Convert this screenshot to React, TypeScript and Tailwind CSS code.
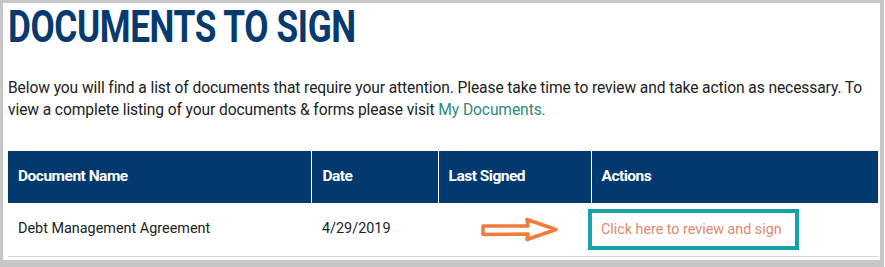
export default function App() {
  const font = { fontFamily: 'Roboto, "Noto Sans", sans-serif' };
  return (
    <div className="w-[885px] h-[267px] bg-white overflow-hidden" style={font}>
      <div className="h-[267px] w-[884px] border-l-[3px] border-t-[3px] border-r-[4px] border-b-[7px] border-[#c6c6c6] bg-white">
        <div className="pl-[5px] pr-[2px]">
          <h1 className="h-[50px] pt-[2px] text-[44px] leading-[44px] font-bold text-[#073b6f]">
            <span className="inline-block origin-left scale-x-[0.8] tracking-[-0.5px]">DOCUMENTS TO SIGN</span>
          </h1>
          <p className="mt-[24px] text-[15.6px] leading-[22px] text-[#222] tracking-[-0.1px]">
            Below you will find a list of documents that require your attention. Please take time to review and take action as necessary. To
            view a complete listing of your documents &amp; forms please visit{' '}
            <a className="text-[#2e8a7c]">My Documents.</a>
          </p>
          <table className="mt-[30px] w-[870px] border-collapse">
            <thead>
              <tr className="h-[52px] bg-[#023a70] text-white text-[15.5px]">
                <th className="w-[303px] px-[10px] text-left font-bold tracking-[-0.5px]">Document Name</th>
                <th className="w-[127px] border-l border-white px-[11px] text-left font-bold tracking-[-0.5px]">Date</th>
                <th className="w-[153px] border-l border-white px-[10px] text-left font-bold tracking-[-0.5px]">Last Signed</th>
                <th className="border-l border-white px-[10px] text-left font-bold tracking-[-0.5px]">Actions</th>
              </tr>
            </thead>
            <tbody>
              <tr className="h-[53px] border-b border-[#d4d4d4] text-[#222] text-[14.4px]">
                <td className="px-[10px]">Debt Management Agreement</td>
                <td className="px-[11px]">4/29/2019</td>
                <td className="px-[10px]">
                  <div className="flex justify-end pr-[21px] pt-[2px]">
                    <svg width="80" height="26" viewBox="0 0 80 26">
                      <path
                        d="M3 9 L48 9 L47 2.5 L76 12.5 L47 22.5 L48 17 L3 17.5 Z"
                        fill="white"
                        stroke="#f07b3a"
                        strokeWidth="3.5"
                        strokeLinejoin="round"
                      />
                    </svg>
                  </div>
                </td>
                <td className="pl-[0px]">
                  <div className="ml-[-3px] flex h-[41px] w-[211px] items-center border-4 border-[#17a2ab] pl-[9px] text-[14.3px] text-[#e4876a]">
                    Click here to review and sign
                  </div>
                </td>
              </tr>
            </tbody>
          </table>
        </div>
      </div>
    </div>
  );
}
